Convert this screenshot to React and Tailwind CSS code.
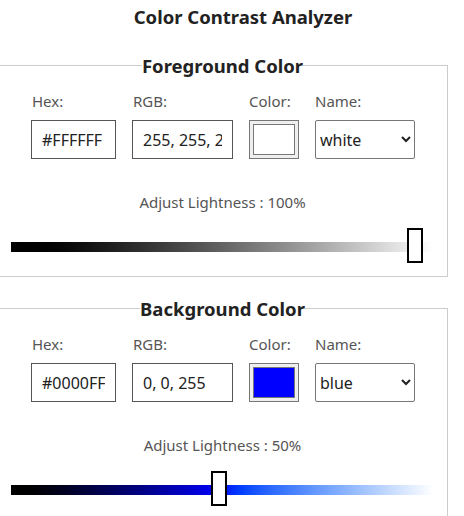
import React, { useState } from "react";

const font = "font-['Noto_Sans','Open_Sans',sans-serif]";

function ColorPanel({ title, hex, rgb, swatch, name, options, lightness, track }) {
  const [value, setValue] = useState(name);
  const thumbLeft = 3.5 + 3.92 * lightness;

  return (
    <fieldset className="-ml-[3px] w-[451px] border border-[#cccccc] p-0 pb-[13px]">
      <legend className="mx-auto px-0 text-[18.5px] font-bold leading-[25px] text-[#222]">
        {title}
      </legend>

      <div className="mt-[13px] ml-[33px] flex gap-4">
        <div className="flex flex-col">
          <label className="pl-px text-[15px] leading-[20px] text-[#555]">Hex:</label>
          <input
            className="mt-[9px] h-[39px] w-[85px] border border-[#555] bg-white px-[10px] text-[16px] text-[#222] outline-none"
            defaultValue={hex}
          />
        </div>
        <div className="flex flex-col">
          <label className="pl-px text-[15px] leading-[20px] text-[#555]">RGB:</label>
          <input
            className="mt-[9px] h-[39px] w-[101px] border border-[#555] bg-white px-[10px] text-[16px] text-[#222] outline-none"
            defaultValue={rgb}
          />
        </div>
        <div className="flex flex-col">
          <label className="text-[15px] leading-[20px] text-[#555]">Color:</label>
          <div className="mt-[9px] flex h-[39px] w-[50px] border border-[#767676] bg-[#efefef] p-[3px]">
            <div className={`flex-1 border border-[#777] ${swatch}`} />
          </div>
        </div>
        <div className="flex flex-col">
          <label className="text-[15px] leading-[20px] text-[#555]">Name:</label>
          <select
            className="mt-[9px] h-[39px] w-[100px] rounded-[2px] border border-[#767676] bg-white pl-0 text-[16px] text-[#222] outline-none"
            value={value}
            onChange={(e) => setValue(e.target.value)}
          >
            {options.map((o) => (
              <option key={o}>{o}</option>
            ))}
          </select>
        </div>
      </div>

      <p className="mt-[33px] text-center text-[15px] leading-[20px] text-[#555]">
        Adjust Lightness : {lightness}%
      </p>

      <div className="relative mt-[16px] ml-[13px] h-[35px] w-[422px]">
        <div className={`absolute top-[14px] h-[10px] w-full ${track}`} />
        <div
          className="absolute top-0 h-[35px] w-[16px] border-2 border-black bg-white"
          style={{ left: thumbLeft }}
        />
      </div>
    </fieldset>
  );
}

export default function App() {
  return (
    <div className={`w-[464px] overflow-hidden bg-white ${font}`}>
      <h1 className="pt-[5px] pl-[22px] text-center text-[18.5px] font-bold leading-[24px] text-[#222]">
        Color Contrast Analyzer
      </h1>

      <div className="mt-[24px]">
        <ColorPanel
          title="Foreground Color"
          hex="#FFFFFF"
          rgb="255, 255, 255"
          swatch="bg-white"
          name="white"
          options={["white", "black", "blue", "red"]}
          lightness={100}
          track="bg-linear-to-r from-black to-white"
        />
      </div>

      <div className="mt-[19px]">
        <ColorPanel
          title="Background Color"
          hex="#0000FF"
          rgb="0, 0, 255"
          swatch="bg-[#0000ff]"
          name="blue"
          options={["white", "black", "blue", "red"]}
          lightness={50}
          track="bg-linear-to-r from-black via-[#0000ff] to-white"
        />
      </div>
    </div>
  );
}
